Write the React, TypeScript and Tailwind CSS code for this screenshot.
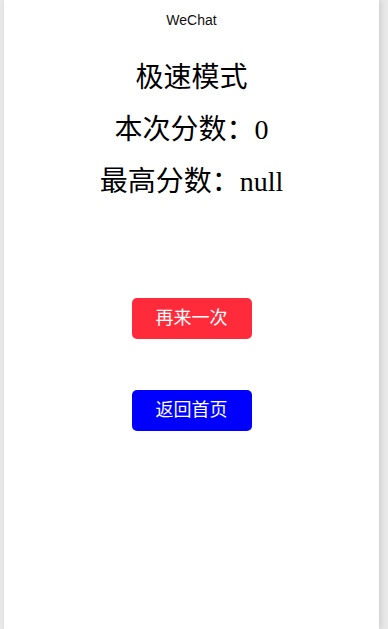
import React from "react";

const App: React.FC = () => {
  const best: number | null = null;

  return (
    <div className="min-h-[629px] bg-[#e9e9e9] pl-[4px]">
      <div className="w-[375px] min-h-[629px] bg-white shadow-[2px_0_6px_rgba(0,0,0,0.12)] flex flex-col items-center">
        <div className="h-[40px] flex items-center justify-center text-[14px] text-[#111] font-['Liberation_Sans',Arial,sans-serif]">
          WeChat
        </div>
        <div className="flex flex-col items-center text-[28px] leading-[52px] text-black font-['Liberation_Serif','Noto_Sans_CJK_SC',serif] mt-[12px]">
          <div>极速模式</div>
          <div>本次分数：0</div>
          <div>最高分数：{String(best)}</div>
        </div>
        <button className="mt-[90px] w-[120px] h-[41px] rounded-[5px] bg-[#ff2b3b] text-white text-[18px] font-['Liberation_Serif','Noto_Sans_CJK_SC',serif]">
          再来一次
        </button>
        <button className="mt-[51px] w-[120px] h-[41px] rounded-[5px] bg-[#0000ff] text-white text-[18px] font-['Liberation_Serif','Noto_Sans_CJK_SC',serif]">
          返回首页
        </button>
      </div>
    </div>
  );
};

export default App;
